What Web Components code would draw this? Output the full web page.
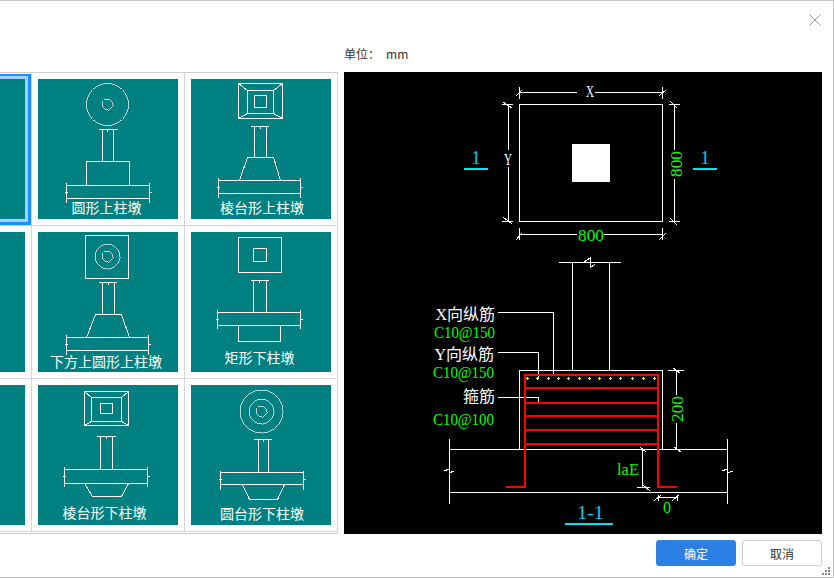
<!DOCTYPE html>
<html lang="zh">
<head>
<meta charset="utf-8">
<title>柱墩</title>
<style>
  html, body { margin: 0; height: 100%; overflow: hidden; background: #fff; }
</style>
</head>
<body>
<pier-dialog>
  <unit-label slot="header">mm</unit-label>

  <pier-grid slot="list">
    <pier-cell selected first><pier-thumb></pier-thumb></pier-cell>
    <pier-cell><pier-thumb shape="roundUp" top="120" shift="-3">圆形上柱墩</pier-thumb></pier-cell>
    <pier-cell><pier-thumb shape="frustumUp" top="120" shift="2">棱台形上柱墩</pier-thumb></pier-cell>
    <pier-cell first><pier-thumb></pier-thumb></pier-cell>
    <pier-cell><pier-thumb shape="mixedUp" top="121" shift="-4">下方上圆形上柱墩</pier-thumb></pier-cell>
    <pier-cell><pier-thumb shape="rectDown" top="117" shift="-3">矩形下柱墩</pier-thumb></pier-cell>
    <pier-cell first><pier-thumb></pier-thumb></pier-cell>
    <pier-cell><pier-thumb shape="frustumDown" top="119" shift="-7">棱台形下柱墩</pier-thumb></pier-cell>
    <pier-cell><pier-thumb shape="coneDown" top="120" shift="2">圆台形下柱墩</pier-thumb></pier-cell>
  </pier-grid>

  <cad-section slot="preview"></cad-section>

  <dlg-button slot="footer" primary>确定</dlg-button>
  <dlg-button slot="footer">取消</dlg-button>
</pier-dialog>

<script>
const CJK = '"Noto Sans CJK SC", "Noto Sans", sans-serif';

// ---------- dialog frame ----------
class PierDialog extends HTMLElement {
  constructor() {
    super();
    this.attachShadow({mode: 'open'}).innerHTML = `
      <style>
        :host {
          display: flex;
          flex-direction: column;
          box-sizing: border-box;
          position: relative;
          width: 834px;
          height: 578px;
          border: 1px solid #c4c4c4;
          border-left: 0;
          background: #fff;
          font: 12px ${CJK};
          color: #333;
        }
        .head { display: flex; flex-direction: column; height: 71px; padding-left: 344px; }
        .close { align-self: flex-end; width: 12px; height: 12px; margin: 13px 12px 0 0; }
        .unit { margin-top: 18px; }
        .main { display: flex; gap: 6px; }
        .foot { display: flex; justify-content: flex-end; gap: 6px; padding: 6px 11px 0 0; }
        .grip { position: absolute; right: 3px; bottom: 2px; width: 8px; height: 8px; }
      </style>
      <div class="head">
        <svg class="close" viewBox="0 0 12 12"><path d="M.5.5l11 11M11.5.5l-11 11" stroke="#999" fill="none"/></svg>
        <div class="unit"><slot name="header"></slot></div>
      </div>
      <div class="main">
        <slot name="list"></slot>
        <slot name="preview"></slot>
      </div>
      <div class="foot"><slot name="footer"></slot></div>
      <svg class="grip" viewBox="0 0 8 8" fill="#8a8a8a">
        <rect x="6" y="0" width="2" height="2"/>
        <rect x="3" y="3" width="2" height="2"/><rect x="6" y="3" width="2" height="2"/>
        <rect x="0" y="6" width="2" height="2"/><rect x="3" y="6" width="2" height="2"/><rect x="6" y="6" width="2" height="2"/>
      </svg>`;
  }
}

class UnitLabel extends HTMLElement {
  constructor() {
    super();
    this.attachShadow({mode: 'open'}).innerHTML = `
      <style>
        :host { display: flex; gap: 6px; line-height: 20px; font-size: 12px; color: #333; }
      </style>
      <span>单位：</span><span><slot></slot></span>`;
  }
}

class DlgButton extends HTMLElement {
  constructor() {
    super();
    this.attachShadow({mode: 'open'}).innerHTML = `
      <style>
        :host {
          display: flex;
          align-items: center;
          justify-content: center;
          box-sizing: border-box;
          width: 80px;
          height: 26px;
          border: 1px solid #ccc;
          border-radius: 3px;
          background: #fff;
          color: #333;
          font-size: 12px;
          cursor: pointer;
        }
        :host([primary]) { background: #2d7fe3; border-color: #2d7fe3; color: #fff; }
      </style>
      <slot></slot>`;
  }
}

// ---------- left list ----------
class PierGrid extends HTMLElement {
  constructor() {
    super();
    this.attachShadow({mode: 'open'}).innerHTML = `
      <style>
        :host {
          display: grid;
          grid-template-columns: 32px 153px 153px;
          grid-auto-rows: 153px;
          padding-bottom: 1px;
          border-top: 1px solid #cfcfcf;
          border-bottom: 1px solid #c8c8c8;
        }
      </style>
      <slot></slot>`;
  }
}

class PierCell extends HTMLElement {
  constructor() {
    super();
    this.attachShadow({mode: 'open'}).innerHTML = `
      <style>
        :host {
          display: flex;
          justify-content: flex-end;
          position: relative;
          box-sizing: border-box;
          padding: 6px;
          border-right: 1px solid #d6d6d6;
          border-bottom: 1px solid #d6d6d6;
          overflow: hidden;
        }
        :host([first]) { padding-left: 0; }
        :host([selected])::before {
          content: "";
          position: absolute;
          top: 1px;
          left: -10px;
          right: 0;
          bottom: 0;
          border: 3px solid #1890ff;
          border-top-width: 2px;
        }
        :host([selected])::after {
          content: "";
          position: absolute;
          top: 3px;
          left: -10px;
          right: 3px;
          bottom: 3px;
          border: 3px solid #a3d0ff;
        }
      </style>
      <slot></slot>`;
  }
}

// 140x140 thumbnail drawings, one pixel lines
const rect = (x1, y1, x2, y2) => `M${x1} ${y1}H${x2}V${y2}H${x1}Z`;
const circle = (cx, cy, r) => `<circle cx="${cx}" cy="${cy}" r="${r}" stroke-width=".7"/>`;
const slab = (x1, x2, y1, y2, up, down, mid) =>
  `M${x1} ${y1 - up}V${y2 + down}M${x2} ${y1 - up}V${y2 + down}M${x1} ${y1}H${x2}M${x1} ${y2}H${x2}` +
  `M${x1 - 2} ${mid}h3M${x2 - 1} ${mid}h3`;
const column = (x1, x2, y1, y2, t1, t2) =>
  `M${t1} ${y1}H${t2}M${x1} ${y1}V${y2}M${x2} ${y1}V${y2}M${(x1 + x2 >> 1)} ${y1 - 1}v3`;
const corners = (o, m) =>
  `M${o[0]} ${o[1]}L${m[0]} ${m[1]}M${o[2]} ${o[1]}L${m[2]} ${m[1]}M${o[0]} ${o[3]}L${m[0]} ${m[3]}M${o[2]} ${o[3]}L${m[2]} ${m[3]}`;

const SHAPES = {
  roundUp: {
    circles: circle(69, 25, 21) + circle(69, 25, 5.5),
    d: column(64, 75, 50, 82, 60, 79) + rect(48, 82, 91, 106) + slab(28, 111, 106, 119, 3, 4, 113),
  },
  frustumUp: {
    d: rect(47, 4, 91, 39) + rect(56, 11, 82, 34) + rect(63, 16, 75, 28) +
      corners([47, 4, 91, 39], [56, 11, 82, 34]) +
      column(63, 75, 47, 78, 59, 77) + 'M56 78H82L89 101M56 78L48 101' + slab(27, 109, 101, 114, 3, 4, 108),
  },
  mixedUp: {
    circles: circle(69, 24, 12.5) + circle(69, 24, 5.5),
    d: rect(47, 3, 90, 46) + column(64, 76, 50, 82, 60, 78) + 'M57 82H83L91 105M57 82L48 105' +
      slab(28, 110, 105, 118, 3, 4, 112),
  },
  rectDown: {
    d: rect(47, 5, 90, 40) + rect(62, 16, 75, 29) + column(62, 75, 48, 80, 59, 77) +
      slab(26, 109, 80, 93, 3, 3, 87) + 'M47 93V109H89V93',
  },
  frustumDown: {
    d: rect(46, 6, 90, 40) + rect(53, 12, 83, 36) + rect(62, 18, 74, 28) +
      corners([46, 6, 90, 40], [53, 12, 83, 36]) +
      column(62, 74, 51, 84, 58, 77) + slab(26, 109, 84, 98, 3, 3, 91) + 'M46 98L54 111H83L90 98',
  },
  coneDown: {
    circles: circle(70, 26, 21.5) + circle(70, 26, 12.5) + circle(70, 26, 5.5),
    d: column(67, 77, 54, 87, 62, 80) + slab(29, 112, 87, 99, 2, 5, 94) + 'M51 99L58 114H86L93 99',
  },
};

class PierThumb extends HTMLElement {
  constructor() {
    super();
    const s = SHAPES[this.getAttribute('shape')];
    const top = this.getAttribute('top') || 120;
    const shift = this.getAttribute('shift') || 0;
    const art = s ? `
      <svg viewBox="0 0 140 140" width="140" height="140" shape-rendering="crispEdges">
        <g transform="translate(.5 .5)" fill="none" stroke="#fff">
          ${s.circles || ''}<path d="${s.d}"/>
        </g>
      </svg>` : '';
    this.attachShadow({mode: 'open'}).innerHTML = `
      <style>
        :host { display: block; flex: none; position: relative; width: 140px; height: 140px; background: #008080; }
        svg { display: block; }
        .label {
          position: absolute;
          left: ${shift}px;
          right: 0;
          top: ${top}px;
          text-align: center;
          white-space: nowrap;
          color: #fff;
          font: 14px/16px ${CJK};
        }
      </style>
      ${art}<div class="label"><slot></slot></div>`;
  }
}

// ---------- right preview, uses page coordinates in the viewBox ----------
const plusXs = [322, 352, 385, 415, 445, 478, 508, 538, 571, 601, 637, 670, 703].map(v => Math.round(v / 3 + 420));
const plusMarks = plusXs.map(x => `M${x - 1} 378h3M${x} 377v3`).join('');

class CadSection extends HTMLElement {
  constructor() {
    super();
    this.attachShadow({mode: 'open'}).innerHTML = `
      <style>
        :host { display: block; width: 478px; height: 462px; background: #000; }
        svg { display: block; }
        .w { stroke: #fff; fill: none; }
        .r { stroke: #f00; fill: none; }
        .y { stroke: #ff0; fill: none; }
        .c { stroke: #00e6f0; fill: none; }
        text { font-family: "Liberation Serif", ${CJK}; stroke: none; }
        .gt { fill: #0f0; font-size: 17px; }
        .wt { fill: #fff; font-size: 16px; }
        .ct { fill: #00c8f0; font-size: 19px; }
      </style>
      <svg viewBox="344 72 478 462" width="478" height="462">
        <g shape-rendering="crispEdges">
          <!-- plan -->
          <path class="w" d="M519.5 104.5H662.5V221.5H519.5Z"/>
          <rect x="572" y="144" width="38" height="38" fill="#fff"/>
          <path class="w" d="M519.5 92.5H577M595 92.5H662.5M519.5 87V99M662.5 87V99M516 96L522 90M659 96L666 90"/>
          <path class="w" d="M508.5 104.5V150M508.5 167V221.5M502 104.5H513M502 221.5H513M503 102L512 108M503 217L512 224"/>
          <path class="w" d="M674.5 104.5V150M674.5 179V221.5M669 104.5H680M669 221.5H680M670 101L677 108M670 218L677 225"/>
          <path class="w" d="M519.5 234.5H577M604 234.5H662.5M519.5 228V240M662.5 228V240M516 240L522 233M659 240L666 233"/>
          <path class="c" stroke-width="2" d="M464 169H488M693 169H717M565 524H613"/>

          <!-- section -->
          <path class="w" d="M559 262.5H621M572.5 262.5V370M609.5 262.5V370M584 262L590 258V268L595 264"/>
          <path class="w" d="M519.5 449V370.5H662.5V449"/>
          <path class="w" d="M449.5 449.5H727.5M449.5 492.5H727.5M449.5 439V504M727.5 439V504M444 471L449 469V473L454 471M722 471L727 469V473L733 471"/>
          <path class="w" d="M498 312.5H553.5V375M498 352.5H538.5V378M498 397.5H538.5V403"/>
          <path class="w" d="M676.5 370V395M676.5 423V449M668 370.5H684M673 368L680 373M674 447L681 452"/>
          <path class="w" d="M642.5 449V487M637 487.5H650M640 447L646 452M643 485L650 491"/>
          <path class="w" d="M658 497.5H677M658.5 495V501M677.5 495V501M654 501L661 495M672 501L679 495"/>
          <path class="r" stroke-width="2" d="M506 487H525V375H658V487H677"/>
          <path class="r" stroke-width="2" d="M525 388H658M525 403H658M525 416H658M525 430H658M525 444H658"/>
          <path class="y" d="${plusMarks}"/>
        </g>

        <text class="wt" x="586" y="97" textLength="8" lengthAdjust="spacingAndGlyphs">X</text>
        <text class="wt" x="504" y="165" textLength="8" lengthAdjust="spacingAndGlyphs">Y</text>
        <text class="gt" x="578" y="241" textLength="26" lengthAdjust="spacingAndGlyphs">800</text>
        <text class="gt" transform="translate(682 177) rotate(-90)" textLength="26" lengthAdjust="spacingAndGlyphs">800</text>
        <text class="ct" x="476" y="164" text-anchor="middle">1</text>
        <text class="ct" x="705" y="164" text-anchor="middle">1</text>

        <text class="wt" x="495" y="320" text-anchor="end">X向纵筋</text>
        <text class="gt" x="434" y="338" textLength="61" lengthAdjust="spacingAndGlyphs">C10@150</text>
        <text class="wt" x="494" y="360" text-anchor="end">Y向纵筋</text>
        <text class="gt" x="433" y="378" textLength="61" lengthAdjust="spacingAndGlyphs">C10@150</text>
        <text class="wt" x="495" y="402" text-anchor="end">箍筋</text>
        <text class="gt" x="433" y="425" textLength="61" lengthAdjust="spacingAndGlyphs">C10@100</text>
        <text class="gt" transform="translate(683 422) rotate(-90)" textLength="26" lengthAdjust="spacingAndGlyphs">200</text>
        <text class="gt" x="617" y="475" textLength="22" lengthAdjust="spacingAndGlyphs">laE</text>
        <text class="gt" x="663" y="513" textLength="8" lengthAdjust="spacingAndGlyphs">0</text>
        <text class="ct" x="577" y="519" textLength="27" lengthAdjust="spacingAndGlyphs">1-1</text>
      </svg>`;
  }
}

customElements.define('pier-dialog', PierDialog);
customElements.define('unit-label', UnitLabel);
customElements.define('dlg-button', DlgButton);
customElements.define('pier-grid', PierGrid);
customElements.define('pier-cell', PierCell);
customElements.define('pier-thumb', PierThumb);
customElements.define('cad-section', CadSection);
</script>
</body>
</html>
